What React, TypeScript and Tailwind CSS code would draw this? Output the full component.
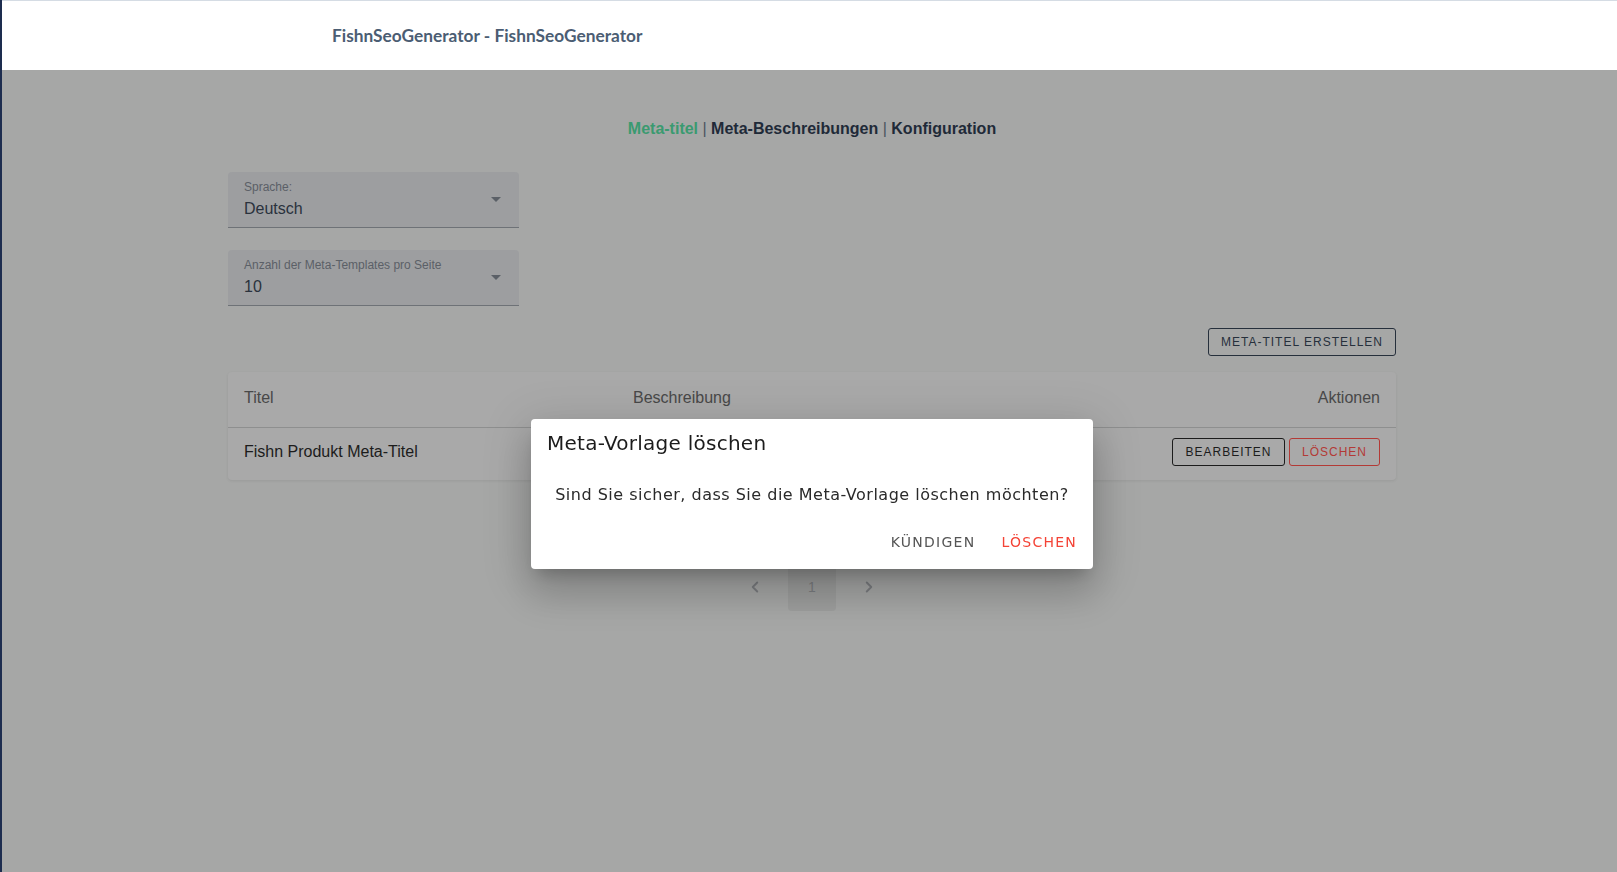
import { ChevronLeft, ChevronRight } from "lucide-react";

function SelectField({ label, value }: { label: string; value: string }) {
  return (
    <div className="relative w-[291px] h-[56px] bg-[#9d9ea0] rounded-t-[4px] border-b border-[#6e7277] px-4">
      <div className="pt-[7px] text-[12px] leading-[16px] text-[#5b6067]">{label}</div>
      <div className="mt-[3px] text-[16px] leading-[22px] text-[#2a323d]">{value}</div>
      <div className="absolute right-[18px] top-[25px] w-0 h-0 border-l-[5px] border-r-[5px] border-t-[5px] border-l-transparent border-r-transparent border-t-[#5b6067]" />
    </div>
  );
}

export default function App() {
  return (
    <div className="min-h-screen w-full bg-[#a6a7a6] border-l-2 border-[#1d2d4f] font-['Liberation_Sans',Arial,sans-serif]">
      <header className="h-[70px] bg-white border-t border-[#d5dce4] flex items-center pl-[330px]">
        <span className="font-['Lato',sans-serif] font-bold text-[17.3px] text-[#4b5d73]">
          FishnSeoGenerator - FishnSeoGenerator
        </span>
      </header>

      <main className="ml-[226px] w-[1168px] pt-[47px] pb-10">
        <nav className="text-center text-[16px] leading-[24px] font-bold text-[#1f2a38]">
          <span className="text-[#3a9a70]">Meta-titel</span>
          <span className="font-normal text-[#4a545e]"> | </span>
          <span>Meta-Beschreibungen</span>
          <span className="font-normal text-[#4a545e]"> | </span>
          <span>Konfiguration</span>
        </nav>

        <div className="mt-[31px] flex flex-col gap-[22px]">
          <SelectField label="Sprache:" value="Deutsch" />
          <SelectField label="Anzahl der Meta-Templates pro Seite" value="10" />
        </div>

        <div className="mt-[22px] flex justify-end">
          <button className="h-[28px] px-[12px] border border-[#26303c] rounded-[3px] text-[12px] tracking-[1px] text-[#26303c]">
            META-TITEL ERSTELLEN
          </button>
        </div>

        <div className="mt-[16px] bg-[#a9a9a9] rounded-[4px] shadow-[0_1px_3px_rgba(0,0,0,0.08)]">
          <div className="h-[56px] pb-[3px] grid grid-cols-[389px_1fr_auto] items-center px-4 border-b border-[#8e8f8f] text-[16px] text-[#484848]">
            <span>Titel</span>
            <span>Beschreibung</span>
            <span>Aktionen</span>
          </div>
          <div className="h-[52px] pb-[4px] grid grid-cols-[389px_1fr_auto] items-center px-4 text-[16px] text-[#1c1c1c]">
            <span>Fishn Produkt Meta-Titel</span>
            <span></span>
            <div className="flex gap-[4px]">
              <button className="h-[28px] w-[113px] border border-[#1c1c1c] rounded-[3px] text-[12px] tracking-[1px] text-[#1c1c1c]">
                BEARBEITEN
              </button>
              <button className="h-[28px] w-[91px] border border-[#b33a36] rounded-[3px] text-[12px] tracking-[1px] text-[#b33a36]">
                LÖSCHEN
              </button>
            </div>
          </div>
        </div>

        <div className="mt-[83px] flex justify-center gap-[9px]">
          <div className="w-[48px] h-[48px] flex items-center justify-center text-[#7b7d80]">
            <ChevronLeft size={18} strokeWidth={2.5} />
          </div>
          <div className="w-[48px] h-[48px] flex items-center justify-center bg-[#9d9e9d] rounded-[4px] text-[14px] text-[#7b7d80]">
            1
          </div>
          <div className="w-[48px] h-[48px] flex items-center justify-center text-[#7b7d80]">
            <ChevronRight size={18} strokeWidth={2.5} />
          </div>
        </div>
      </main>

      <div className="fixed left-[531px] top-[419px] w-[562px] h-[150px] bg-white rounded-[4px] shadow-[0_11px_15px_-7px_rgba(0,0,0,0.2),0_24px_38px_3px_rgba(0,0,0,0.14),0_9px_46px_8px_rgba(0,0,0,0.12)] font-['DejaVu_Sans',sans-serif]">
        <div className="pt-2 pl-4 text-[20px] leading-[32px] tracking-[0.25px] text-[#1c1c1c]">Meta-Vorlage löschen</div>
        <div className="pt-[24px] text-center text-[16px] leading-[24px] tracking-[0.5px] text-[#2a2a2a]">
          Sind Sie sicher, dass Sie die Meta-Vorlage löschen möchten?
        </div>
        <div className="mt-[17px] flex justify-end gap-[10px] pr-[8px]">
          <button className="h-[36px] px-2 text-[14px] tracking-[1.25px] text-[#555555]">KÜNDIGEN</button>
          <button className="h-[36px] px-2 text-[14px] tracking-[1.25px] text-[#f44336]">LÖSCHEN</button>
        </div>
      </div>
    </div>
  );
}
